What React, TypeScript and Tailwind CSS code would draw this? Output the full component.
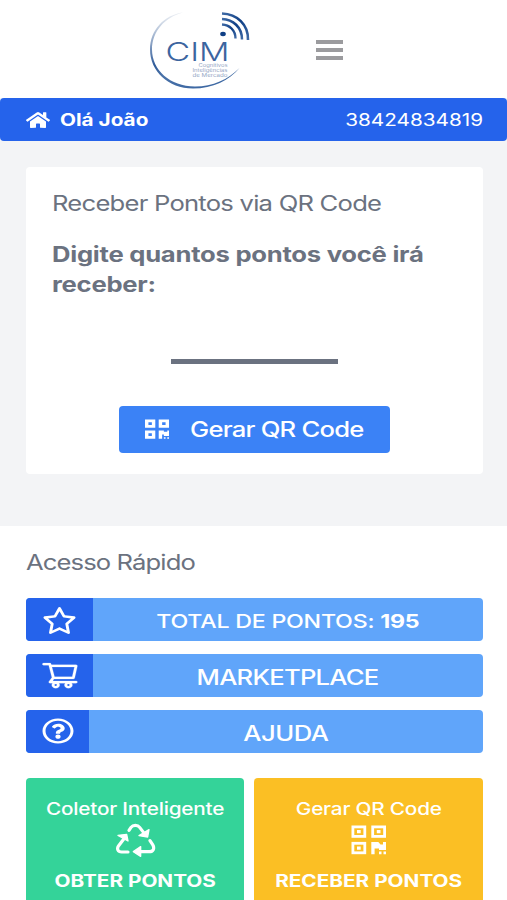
import type { ReactNode } from "react";
import { AiOutlineShoppingCart } from "react-icons/ai";
import { FaHome, FaQrcode, FaRegQuestionCircle } from "react-icons/fa";
import { FaRegStar } from "react-icons/fa6";

function Logo() {
  return (
    <svg viewBox="0 0 110 80" className="h-20 w-[110px]" fill="none">
      <defs>
        <linearGradient id="ring" x1="0.4" y1="0" x2="0.6" y2="1">
          <stop offset="0" stopColor="#e8ecf2" />
          <stop offset="0.3" stopColor="#8ea5c6" />
          <stop offset="0.6" stopColor="#2f5b99" />
          <stop offset="0.75" stopColor="#4a72a8" />
          <stop offset="1" stopColor="#3d68a3" />
        </linearGradient>
        <linearGradient id="wave" x1="0" y1="0" x2="1" y2="1">
          <stop offset="0" stopColor="#3f6aa5" />
          <stop offset="0.5" stopColor="#0f3f86" />
          <stop offset="1" stopColor="#3f6aa5" />
        </linearGradient>
      </defs>
      <path
        d="M38 2.500C19 5 5 20 5 39.500C5 61 23 78.500 48 78.500c20 0 36-8 46.500-20.500C83 69.500 68 76.500 50 76.500C25 76.500 7 60 7 39.500C7 21.500 20 7 38 2.500z"
        fill="url(#ring)"
      />
      <g stroke="url(#wave)">
        <path d="M77 3.500c15 .5 26.500 11 26 26.500" strokeWidth="2.600" />
        <path d="M77 9c11 .5 20 8 20 20.500" strokeWidth="2.500" />
        <path d="M77 14.500c7.500 .5 13.500 5.500 13.500 14" strokeWidth="2.400" />
      </g>
      <ellipse cx="78" cy="24" rx="2.800" ry="2.200" fill="#0f3f86" />
      <text
        x="20.500"
        y="50.500"
        textLength="64"
        lengthAdjust="spacingAndGlyphs"
        fill="#3c659f"
        fontFamily="Inter, sans-serif"
        fontSize="25"
        fontWeight="300"
      >
        CIM
      </text>
      <g fill="#93a5c3" fontFamily="Inter, sans-serif" fontSize="4.200" textAnchor="end">
        <text x="82.500" y="57.300" textLength="29" lengthAdjust="spacingAndGlyphs">Cognitivos</text>
        <text x="82.500" y="62.200" textLength="35" lengthAdjust="spacingAndGlyphs">Inteligências</text>
        <text x="82.500" y="67" textLength="35" lengthAdjust="spacingAndGlyphs">de Mercado</text>
      </g>
    </svg>
  );
}

function RecycleIcon() {
  return (
    <svg viewBox="0 0 123 102" className="h-[34px] w-[41px]" fill="none">
      <g stroke="currentColor" strokeWidth="9.500" strokeLinecap="round" strokeLinejoin="round">
        <path d="M42 22L48 13C54 5 68 5 74 13L86 29" />
        <path d="M28 46L11 68C4 78 9 87 20 87H39" />
        <path d="M105 53L113 65C120 77 114 86 103 86H74" />
      </g>
      <g fill="currentColor" stroke="currentColor" strokeWidth="4" strokeLinejoin="round">
        <path d="M102 20L98 42L72 38z" />
        <path d="M9 37L35 34L39 54z" />
        <path d="M77 71V100L55 86z" />
      </g>
    </svg>
  );
}

function QrIcon() {
  return (
    <svg viewBox="0 0 36 30" className="h-[30px] w-9">
      <g fill="none" stroke="currentColor" strokeWidth="2.800">
        <rect x="1.900" y="1.900" width="11.900" height="9.500" />
        <rect x="21.700" y="1.900" width="11.900" height="9.500" />
        <rect x="1.900" y="18.300" width="11.900" height="9.500" />
      </g>
      <g fill="currentColor">
        <path d="M6 5h3.700v3.300H6zM25.800 5h3.700v3.300h-3.700zM6 21.400h3.700v3.300H6z" />
        <path d="M20.300 17h7l2.200 2.400h2.500V17h3v8h-7v-1.600h-4.400v5.800h-3.300z" />
        <path d="M28 26.500h2.500v2.700H28zM32.500 26.500H35v2.700h-2.500z" />
      </g>
    </svg>
  );
}

type QuickLinkProps = {
  icon: ReactNode;
  iconWidth: string;
  textSize: string;
  children: ReactNode;
};

function QuickLink({ icon, iconWidth, textSize, children }: QuickLinkProps) {
  return (
    <a className="flex h-[43px] overflow-hidden rounded bg-[#60a5fa] text-white">
      <div className={`flex items-center bg-[#2563eb] pt-px pl-4 ${iconWidth}`}>{icon}</div>
      <div className={`flex flex-1 items-center justify-center pt-1 font-medium ${textSize}`}>
        <span className="scale-x-[1.22] whitespace-nowrap">{children}</span>
      </div>
    </a>
  );
}

export default function App() {
  return (
    <main className="flex h-[900px] w-[507px] flex-col overflow-hidden bg-[#f3f4f6] font-['Inter',sans-serif] text-[#6b7280]">
      <header className="flex h-[98px] shrink-0 bg-white pt-[10px] pl-[145px]">
        <Logo />
        <div className="mt-[30px] ml-[61px] flex w-[27px] flex-col gap-1">
          <div className="h-1 bg-[#9b9b9e]" />
          <div className="h-1 bg-[#9b9b9e]" />
          <div className="h-1 bg-[#9b9b9e]" />
        </div>
      </header>

      <div className="flex h-[43px] shrink-0 items-center rounded bg-[#2563eb] px-6 text-white">
        <FaHome preserveAspectRatio="none" className="ml-[2px] h-[18px] w-6" />
        <span className="ml-[10px] origin-left scale-x-[1.22] pt-[2px] text-[17px] font-bold">Olá João</span>
        <span className="ml-auto origin-right scale-x-[1.22] pt-[2px] text-[17px]">38424834819</span>
      </div>

      <section className="mx-[26px] mt-[26px] flex h-[307px] w-[457px] shrink-0 flex-col rounded bg-white px-[27px]">
        <h1 className="mt-[22px] -ml-px origin-left scale-x-[1.22] self-start text-[21px] leading-[30px] tracking-[-0.03em] whitespace-nowrap">
          Receber Pontos via QR Code
        </h1>
        <p className="mt-[21px] -ml-px origin-left scale-x-[1.22] self-start text-[21px] leading-[30px] font-bold tracking-[-0.010em] whitespace-nowrap">
          Digite quantos pontos você irá
          <br />
          receber:
        </p>
        <div className="mt-[59px] ml-[118px] h-[5px] w-[167px] bg-[#6b7280]" />
        <button className="mt-[42px] ml-[66px] flex h-[47px] w-[271px] shrink-0 items-center rounded bg-[#3b82f6] pl-[26px] text-white">
          <FaQrcode preserveAspectRatio="none" className="-mt-[2px] h-[22px] w-6" />
          <span className="ml-[21px] origin-left scale-x-[1.22] text-[21px] font-medium tracking-[-0.03em] whitespace-nowrap">
            Gerar QR Code
          </span>
        </button>
      </section>

      <section className="mt-[52px] flex-1 bg-white px-[26px] pt-[22px]">
        <h2 className="w-[200px] origin-left scale-x-[1.22] text-[21px] leading-[30px] tracking-[-0.035em]">
          Acesso Rápido
        </h2>
        <div className="mt-[20.400px] flex w-[457px] flex-col gap-[12.700px]">
          <QuickLink
            iconWidth="w-[67px]"
            textSize="text-[19px] tracking-[-0.010em]"
            icon={<FaRegStar preserveAspectRatio="none" className="h-[27px] w-[35px]" />}
          >
            TOTAL DE PONTOS: <b>195</b>
          </QuickLink>
          <QuickLink
            iconWidth="w-[67px]"
            textSize="text-[21px] tracking-[-0.03em]"
            icon={
              <AiOutlineShoppingCart
                preserveAspectRatio="none"
                strokeWidth="6"
                className="-mt-[2px] -ml-[2px] h-8 w-10"
              />
            }
          >
            MARKETPLACE
          </QuickLink>
          <QuickLink
            iconWidth="w-[63px]"
            textSize="text-[21px] tracking-[-0.02em]"
            icon={<FaRegQuestionCircle preserveAspectRatio="none" className="-mt-px h-[26px] w-8" />}
          >
            AJUDA
          </QuickLink>
        </div>

        <div className="mt-[25.200px] flex w-[457px] gap-[10px] text-[17px] text-white">
          <a className="flex h-[130px] w-[218px] flex-col items-center rounded bg-[#34d399] pt-[17px]">
            <span className="scale-x-[1.22] leading-7 font-medium tracking-[-0.01em] whitespace-nowrap">
              Coletor Inteligente
            </span>
            <div className="h-[34px]">
              <RecycleIcon />
            </div>
            <span className="mt-[11px] scale-x-[1.22] leading-[26px] font-bold whitespace-nowrap">OBTER PONTOS</span>
          </a>
          <a className="flex h-[130px] w-[229px] flex-col items-center rounded bg-[#fbbf24] pt-[17px]">
            <span className="scale-x-[1.22] leading-7 font-medium tracking-[-0.01em] whitespace-nowrap">
              Gerar QR Code
            </span>
            <div className="h-[34px] pt-[2px]">
              <QrIcon />
            </div>
            <span className="mt-[11px] scale-x-[1.22] leading-[26px] font-bold whitespace-nowrap">RECEBER PONTOS</span>
          </a>
        </div>
      </section>
    </main>
  );
}
